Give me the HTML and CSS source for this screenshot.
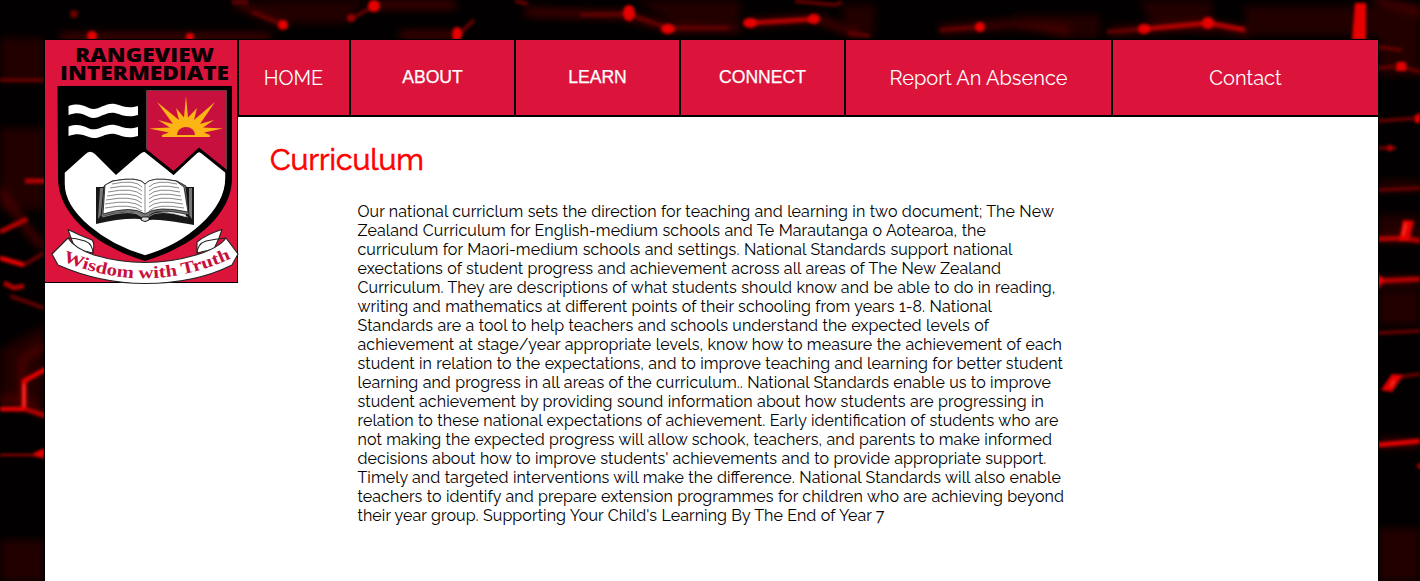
FILE: index.html
```html
<!DOCTYPE html>
<html lang="en">
<head>
<meta charset="utf-8">
<title>Curriculum - Rangeview Intermediate</title>
<link rel="stylesheet" href="styles.css">
</head>
<body>
<svg class="backdrop" viewBox="0 0 1420 581" aria-hidden="true">
  <defs>
    <filter id="soft" filterUnits="userSpaceOnUse" x="-20" y="-20" width="1460" height="621"><feGaussianBlur stdDeviation="1.7"/></filter>
    <filter id="haze" filterUnits="userSpaceOnUse" x="-20" y="-20" width="1460" height="621"><feGaussianBlur stdDeviation="4"/></filter>
  </defs>
  <rect width="1420" height="581" fill="#020000"/>
  <g filter="url(#haze)" fill="#200000">
    <path d="M250 0H365L345 24H285ZM635 0H740V22L680 28ZM1140 0H1212V34L1150 25ZM1245 6H1420V36H1245ZM840 5H875V35H850ZM1010 15H1100V38H1060Z"/>
    <path d="M0 38H44V82H0ZM0 128H44V210H0ZM0 350L44 325V405H0ZM0 540H44V581H0Z"/>
    <path d="M1378 30H1420V76H1378ZM1378 180H1420V192H1378ZM1378 215H1420V236H1378ZM1378 290H1420V325H1378ZM1378 528H1420V581H1378Z"/>
  </g>
  <g filter="url(#haze)" fill="none" stroke="#4d0000" stroke-width="7">
    <path d="M60 37H270M235 2L284 24M370 5H455M400 35H455M525 12L625 15L670 28M670 28H740M750 23L815 18L860 35M940 30L1010 24L1070 30M1110 32L1205 24L1248 32M1375 0L1420 12"/>
    <path d="M0 190L28 230L44 248M0 400H26L44 415M22 410V360L44 345M1378 238H1420M1378 281H1420M1378 443H1420"/>
  </g>
  <g filter="url(#soft)" fill="none" stroke="#600000" stroke-width="4">
    <path d="M232 2H248M252 12L284 25M351 19L374 6M455 38L474 20M515 1L528 4M580 15L630 14M628 14L668 28M668 28H728M795 1L835 5L842 2M848 33L870 36M940 30L980 27M1107 32L1144 29"/>
    <path d="M0 80H44M44 253L24 265M10 296L44 308M1378 47L1402 50M1378 68L1400 66L1420 72M1378 121L1420 118M1378 148H1396M1378 190L1420 188M1378 333L1420 331M1400 377L1420 374"/>
  </g>
  <g filter="url(#soft)" fill="none" stroke="#b00000" stroke-width="5">
    <path d="M25 181H46M0 232L27 219M0 258L24 265M4 283L14 288L24 286M0 409H25L46 416M24 409V381L46 369M34 455L44 452M750 23L816 19M1144 29L1208 23L1245 30"/>
    <path d="M1378 239L1405 238L1420 241M1378 281L1420 279M1378 445L1420 441"/>
    <path d="M0 409H25M24 409V381L46 369M0 258L24 265M1378 445L1420 441" stroke="#f00000" stroke-width="3"/>
    <path d="M0 455H34" stroke-width="2"/>
  </g>
  <g filter="url(#soft)" fill="#e60000">
    <circle cx="74" cy="14" r="4" fill="#6b0000"/><circle cx="92" cy="36" r="5"/><circle cx="190" cy="37" r="4"/>
    <circle cx="283" cy="25" r="5"/><circle cx="351" cy="18" r="4" fill="#990000"/><circle cx="374" cy="6" r="6"/>
    <ellipse cx="457" cy="34" rx="5" ry="7"/><ellipse cx="629" cy="13" rx="6" ry="8"/><ellipse cx="668" cy="29" rx="7" ry="5"/>
    <ellipse cx="750" cy="23" rx="7" ry="5"/><ellipse cx="814" cy="19" rx="6" ry="5"/><circle cx="980" cy="27" r="5"/>
    <ellipse cx="1144" cy="29" rx="6" ry="5"/><ellipse cx="1208" cy="23" rx="6" ry="6"/>
    <path d="M1355 3H1366V40H1352ZM1397 62H1406V71H1396ZM1415 116L1420 112V123H1415ZM1403 220L1414 221L1409 240L1399 241ZM1378 274L1384 280L1378 290ZM1392 374L1403 375L1392 392L1381 390ZM35 455L44 448V459Z"/>
    <circle cx="1390" cy="148" r="3" fill="#aa0000"/><circle cx="1420" cy="466" r="3" fill="#a00000"/>
  </g>
  <path d="M24 384V407M1406 223L1403 236M1394 380L1391 387" stroke="#ff5038" stroke-width="1.5" filter="url(#soft)"/>
</svg>

<div class="page">
  <header class="header">
    <a class="logo" href="#">
      <svg class="crest" viewBox="45 40 194 245" role="img" aria-label="Rangeview Intermediate, Wisdom with Truth">
        <defs><path id="motto" d="M56 258Q145 299 234 257"/></defs>
        <g class="crest-name">
          <text x="75" y="62" textLength="139" lengthAdjust="spacingAndGlyphs">RANGEVIEW</text>
          <text x="60" y="80" textLength="169" lengthAdjust="spacingAndGlyphs">INTERMEDIATE</text>
        </g>
        <path d="M57.5 86H232V178C232 219 186 249 145 261C104 249 58 219 58 178Z" fill="#000"/>
        <path d="M146.500 90.500H226.500V171L199 149L172 174L146.500 151Z" fill="#c8103e" stroke="#655" stroke-width=".7"/>
        <path d="M64 172.500L84.500 154Q90 148 96 154L116 174L139 154Q145 148 151 154L173.500 174L194 154Q199 149 205 154L226 171V178C226 211 187 244 145 256C103 244 64 213 64 184Z" fill="#fff" stroke="#000" stroke-width="1.500"/>
        <path d="M144 149.500L173.500 173L199 149.500L227 172" fill="none" stroke="#000" stroke-width="3"/>
        <path d="M68.500 106C78 103 82 105 89 108C98 112 105 102 115 104C123 106 128 109 138 106V115C128 118 122 115 115 113C105 111 98 121 89 117C82 113 77 112 68.500 115ZM68.500 126.500C78 123.500 82 125.500 89 128.500C98 132 105 123 115 125C123 127 128 130 138 127V136C128 139 122 136 115 134C105 132 98 141 89 137C82 134 77 133 68.500 136Z" fill="#fff"/>
        <path d="M162 137V135L169 132.500L149 128.500L170 127.500L158 120L173 124L157 102L179 120L176 108L184 117.500L186 96L188 117.500L197 108L194 120L215 102L200 124L214 120L203 127.500L223 128.500L204 132.500L210 135V137Z" fill="#fdb515"/>
        <path d="M177 135A9 8 0 0 1 195 135Z" fill="#c8103e"/>
        <path d="M96 187H105L103 216Q136 207 144 216Q152 207 186 217L184 187H194V225Q160 219 149 220Q145 224 140 219Q121 218 96 224Z" fill="#171717"/>
        <path d="M100 188H104L101 215L98 219ZM189 188H192V219L189 215Z" fill="#777"/>
        <path d="M104 186L112 181Q140 176 145 184Q151 176 177 181L186 186L189 215Q157 207 149 216Q145 220 140 216Q130 208 101 217Z" fill="#777" stroke="#000" stroke-width=".7"/>
        <path d="M105 185L113 181Q139 176 145 184Q151 176 176 181L184 187L188 212Q157 205 145 214Q132 205 103 214Z" fill="#fff" stroke="#111" stroke-width=".8"/>
        <g fill="none" stroke="#555" stroke-width=".7">
          <path d="M112 184Q135 179 142 187M110 188Q134 183 142 191M108 192Q133 187 142 195M107 196Q133 191 142 199M106 200Q132 195 142 203M105 204Q132 199 142 207M105 208Q132 203 142 211"/>
          <path d="M149 187Q156 179 177 184M149 191Q157 183 179 188M149 195Q157 187 180 192M149 199Q157 191 181 196M149 203Q157 195 182 200M149 207Q157 199 183 204M149 211Q157 203 184 208M145 184V214"/>
          <path d="M102 217Q133 208 142 217M148 217Q158 208 188 217" stroke="#bbb"/>
        </g>
        <path d="M142 217H149V220Q145 223 141 220Z" fill="#ddd" stroke="#000" stroke-width=".8"/>
        <g fill="#fff" stroke="#222" stroke-width="1.100" stroke-linejoin="round">
          <path d="M68 229.500Q81 236 92 240Q95 243 93 253L75 249L71 238Z"/>
          <path d="M222 229.500Q207 234 197 242V253L214 249L219 238Z"/>
          <path d="M68 238L52 254L58 265Q100 283.500 145 283.500Q195 283.500 232 265L238 254L226 238Q219 248 196 255Q145 270 94 255Q74 248 68 238Z"/>
          <path d="M68 238Q76 238 85 241Q93 244 93 254M226 238Q215 239 206 241Q197 244 197 254" fill="none"/>
        </g>
        <text class="crest-motto"><textPath href="#motto" startOffset="7" textLength="174" lengthAdjust="spacingAndGlyphs">Wisdom with Truth</textPath></text>
      </svg>
    </a>
    <nav class="nav">
      <a class="item home" href="#">HOME</a>
      <button class="item menu">ABOUT</button>
      <button class="item menu">LEARN</button>
      <button class="item menu">CONNECT</button>
      <a class="item wide" href="#">Report An Absence</a>
      <a class="item wide" href="#">Contact</a>
    </nav>
  </header>
  <main class="main">
    <h1 class="title">Curriculum</h1>
    <p class="copy">
      <span style="width:696.5px">Our national curriclum sets the direction for teaching and learning in two document; The New</span>
      <span style="width:628.5px">Zealand Curriculum for English-medium schools and Te Marautanga o Aotearoa, the</span>
      <span style="width:655px">curriculum for Maori-medium schools and settings. National Standards support national</span>
      <span style="width:643.5px">exectations of student progress and achievement across all areas of The New Zealand</span>
      <span style="width:698px">Curriculum. They are descriptions of what students should know and be able to do in reading,</span>
      <span style="width:634.5px">writing and mathematics at different points of their schooling from years 1-8. National</span>
      <span style="width:631.5px">Standards are a tool to help teachers and schools understand the expected levels of</span>
      <span style="width:704.5px">achievement at stage/year appropriate levels, know how to measure the achievement of each</span>
      <span style="width:705.5px">student in relation to the expectations, and to improve teaching and learning for better student</span>
      <span style="width:693.5px">learning and progress in all areas of the curriculum.. National Standards enable us to improve</span>
      <span style="width:686.5px">student achievement by providing sound information about how students are progressing in</span>
      <span style="width:701px">relation to these national expectations of achievement. Early identification of students who are</span>
      <span style="width:694.5px">not making the expected progress will allow schook, teachers, and parents to make informed</span>
      <span style="width:689px">decisions about how to improve students' achievements and to provide appropriate support.</span>
      <span style="width:703.5px">Timely and targeted interventions will make the difference. National Standards will also enable</span>
      <span style="width:706.5px">teachers to identify and prepare extension programmes for children who are achieving beyond</span>
      <span style="width:527px">their year group. Supporting Your Child's Learning By The End of Year 7</span>
    </p>
  </main>
</div>
</body>
</html>
```
FILE: styles.css
```css
* { box-sizing: border-box; }
html, body { height: 100%; overflow: hidden; }
body {
  margin: 0;
  padding: 39px 41px 0 44px;
  background: #000;
  font-family: Raleway, Lato, sans-serif;
}
.backdrop { position: fixed; inset: 0; width: 1420px; height: 581px; z-index: -1; }
.page {
  width: 1335px;
  height: 542px;
  background: #fff;
  border: 1px solid #000;
  border-bottom: 0;
}
.header { display: flex; align-items: flex-start; height: 77px; margin: -1px; }
.logo {
  display: block;
  flex: none;
  width: 194px;
  height: 244px;
  border: 1px solid #000;
  background: crimson;
}
.crest { display: block; width: 194px; height: 245px; overflow: visible; }
.crest-name { font: 800 19px/14px "Open Sans", sans-serif; fill: #080002; }
.crest-motto { font: bold 17px "Liberation Serif", serif; fill: #c8103e; }
.nav { display: flex; height: 78px; border-bottom: 1px solid #000; }
.item {
  display: flex;
  align-items: center;
  justify-content: center;
  height: 77px;
  padding: 0;
  border: 1px solid #000;
  background: crimson;
  color: #fff;
  font: 400 20px/24px Raleway, Lato, sans-serif;
  text-decoration: none;
  white-space: nowrap;
}
.home { width: 112px; padding-right: 1px; }
.menu { width: 165px; font: 400 17.6px/22px "Liberation Sans", sans-serif; padding-bottom: 2px; -webkit-text-stroke: .25px #fff; }
.wide { width: 267px; }
.main { padding: 27px 0 0 225px; }
.title {
  margin: 0;
  font-size: 30px;
  line-height: 36px;
  font-weight: 400;
  color: red;
  -webkit-text-stroke: .7px red;
}
.copy {
  margin: 24px 0 0 87.5px;
  font-size: 16px;
  line-height: 19px;
  color: #000;
  letter-spacing: .09px;
  font-feature-settings: "liga" 1;
}
.copy span { display: block; white-space: nowrap; text-align: justify; text-align-last: justify; }
```
